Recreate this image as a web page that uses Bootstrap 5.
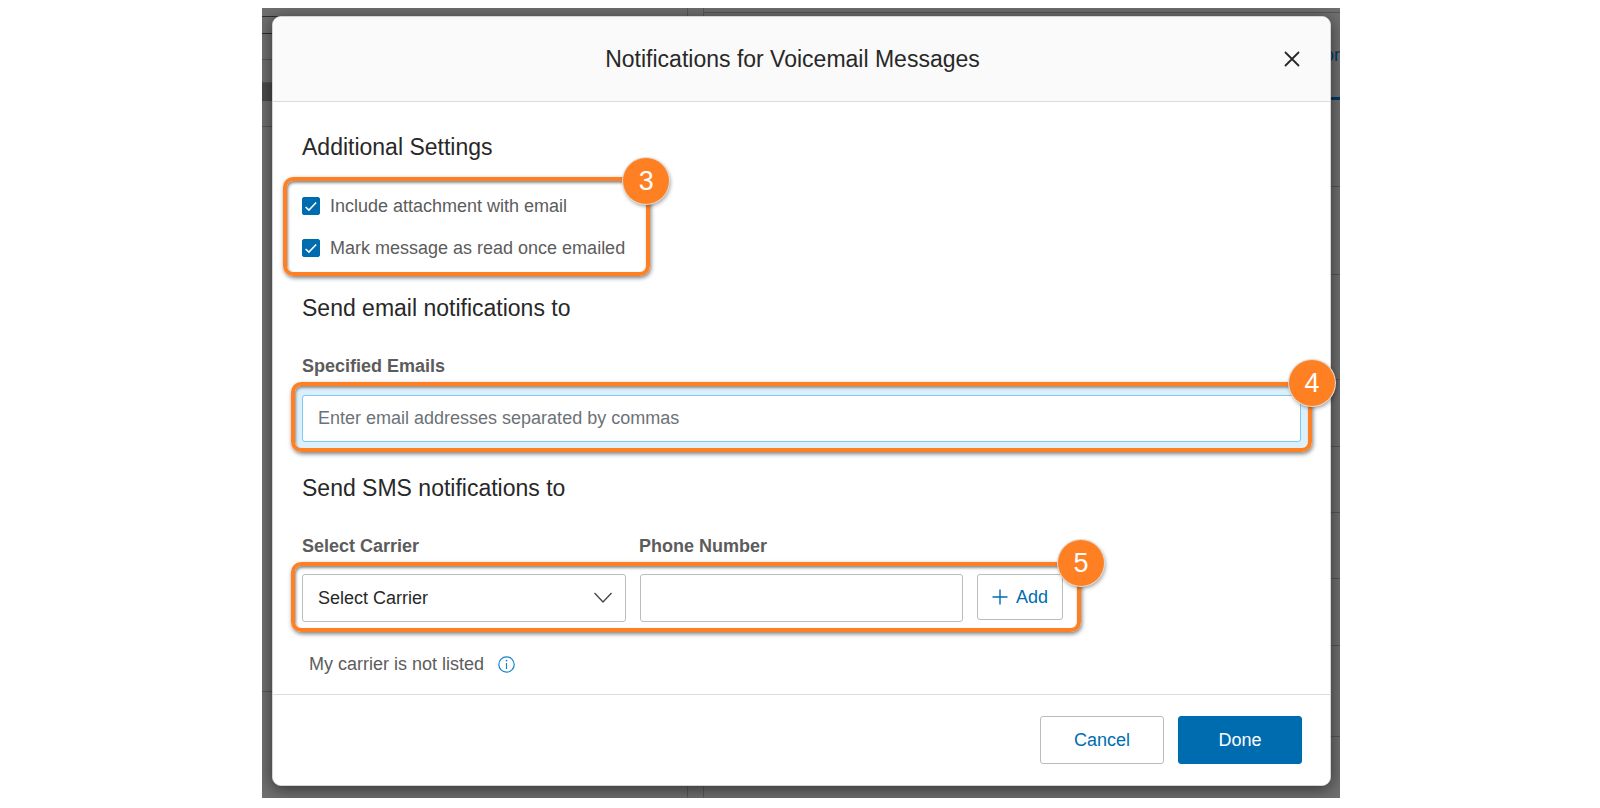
<!DOCTYPE html>
<html lang="en">
<head>
<meta charset="utf-8">
<meta name="viewport" content="width=device-width, initial-scale=1">
<title>Notifications for Voicemail Messages</title>
<link href="https://cdn.jsdelivr.net/npm/bootstrap@5.3.0/dist/css/bootstrap.min.css" rel="stylesheet">
<style>
  :root { --accent: #006cb0; --callout: #ff8023; --ink: #282828; --muted-ink: #5c5c5c; --line: #bcbcbc; }
  body { font-family: "Liberation Sans", Arial, sans-serif; font-size: 18px; line-height: 24px; color: var(--muted-ink); background: #fff; padding-left: 2px; }

  /* dimmed page with the dialog over it */
  .stage { max-width: 1078px; margin: 8px auto 10px; padding: 8px 9px 12px 10px; background: #6f6f6f; overflow: hidden; }
  .behind { inset: 0; }
  .pane-left { width: 426px; border-right: 1px solid #5a5a5a; }
  .pane-right { margin-left: 15px; border-left: 1px solid #5a5a5a; }
  .strip { border-bottom: 1px solid #565656; }
  .strip-strong { border-bottom-color: #2c2c2c; }
  .strip-tab { border-bottom: 3px solid #003a5e; color: #003a5e; line-height: 24px; padding-top: 30px; }
  .strip-fill { background: #4b4b4b; }

  .dialog { border: 1px solid #d4d4d4; border-radius: 9px; box-shadow: 0 3px 16px rgba(0,0,0,.55); }
  .dialog > .card-header { background: #fafafa; border-bottom: 1px solid #dcdcdc; padding: 28px 46px 28px 28px; border-radius: 8px 8px 0 0; }
  .dialog > .card-body { padding: 31px 29px 18px; color: var(--muted-ink); }
  .dialog > .card-footer { background: #fff; border-top: 1px solid #dcdcdc; padding: 21px 28px; border-radius: 0 0 8px 8px; gap: 14px; }
  .heading { font-size: 23px; line-height: 28px; font-weight: 400; color: var(--ink); margin: 0; }
  .field-label { font-weight: 700; margin: 32px 0 4px; }
  .close-btn { right: 28px; width: 20px; height: 20px; }

  /* numbered orange frames */
  .callout { position: relative; border: 4px solid transparent; }
  .callout::after { content: ""; position: absolute; inset: -4px; border: 4px solid var(--callout); border-radius: 10px; pointer-events: none;
    box-shadow: 1px 2px 4px rgba(0,0,0,.5), inset 1px 2px 3px rgba(0,0,0,.45); }
  .callout-checks { width: fit-content; margin: 16px 0 18px -19px; padding: 4px 21px 3px 15px; }
  .callout-field { margin: 0 -11px 22px; padding: 9px 7px 6px; }
  .callout-sms { max-width: 790px; margin: 0 0 20px -11px; padding: 8px 14px 6px 7px; }
  .step { position: absolute; z-index: 2; width: 46px; height: 46px; border-radius: 50%; background: var(--callout); color: #fff; font-size: 27px; line-height: 46px; text-align: center;
    box-shadow: 0 0 0 1px #e6dcd4, 1px 2px 4px rgba(0,0,0,.45); }
  .step-corner { top: -3px; left: calc(100% + 4px); transform: translate(-50%, -50%); }

  .check-row { height: 42px; }
  .check-row .form-check-input { width: 18px; height: 18px; margin: 0 10px 0 0; border-radius: 2px; }
  .check-row .form-check-input:checked { background-color: var(--accent); border-color: var(--accent);
    background-image: url("data:image/svg+xml,%3csvg xmlns='http://www.w3.org/2000/svg' viewBox='0 0 16 16'%3e%3cpath d='M2.6 9l3.3 3.1L13.2 4.400' fill='none' stroke='%23fff' stroke-width='1.5'/%3e%3c/svg%3e"); }

  .field { height: 48px; font-size: 18px; line-height: 24px; border: 1px solid var(--line); border-radius: 3px; padding: 0 15px; color: var(--ink); }
  .field::placeholder { color: #6b7278; }
  .field-active { height: 47px; border-color: #7dcaf4; box-shadow: 0 0 3px 7px #dcf0fb; }
  select.field { background-size: 20px 12px; background-position: right 12px center;
    background-image: url("data:image/svg+xml,%3csvg xmlns='http://www.w3.org/2000/svg' viewBox='0 0 20 12'%3e%3cpath d='M1.500 1L10 10 18.500 1' fill='none' stroke='%23444' stroke-width='1.300'/%3e%3c/svg%3e"); }
  .sms-grid { display: grid; grid-template-columns: 1fr 1fr 86px; column-gap: 14px; }
  .sms-labels { max-width: 760px; }
  .action { height: 48px; width: 124px; padding: 0; font-size: 18px; line-height: 24px; border-radius: 3px; color: var(--accent); background: #fff; border: 1px solid var(--line); }
  .action-main { background: var(--accent); border-color: var(--accent); color: #fff; }
  .action-add { width: auto; height: 46px; gap: 8px; }
  .note { padding-left: 7px; gap: 14px; }
</style>
</head>
<body>
<div class="stage position-relative">
  <div class="behind position-absolute d-flex" aria-hidden="true">
    <div class="pane-left">
      <div class="strip strip-strong" style="height:9px"></div>
      <div class="strip strip-strong" style="height:17px"></div>
      <div class="strip" style="height:26px"></div>
      <div class="strip" style="height:23px"></div>
      <div class="strip-fill" style="height:18px"></div>
      <div class="strip" style="height:26px"></div>
      <div class="strip" style="height:565px"></div>
    </div>
    <div class="pane-right flex-fill">
      <div class="strip" style="height:5px"></div>
      <div class="strip-tab text-end overflow-hidden" style="height:87px">or</div>
      <div class="strip" style="height:87px"></div>
      <div class="strip" style="height:88px"></div>
      <div class="strip" style="height:105px"></div>
      <div class="strip" style="height:67px"></div>
      <div class="strip" style="height:66px"></div>
      <div class="strip" style="height:66px"></div>
      <div class="strip" style="height:67px"></div>
      <div class="strip" style="height:91px"></div>
    </div>
  </div>

  <form class="dialog card" role="dialog" aria-labelledby="dialog-title">
    <div class="card-header d-flex justify-content-center align-items-center position-relative">
      <h1 class="heading" id="dialog-title">Notifications for Voicemail Messages</h1>
      <button type="button" class="close-btn btn p-0 border-0 d-flex align-items-center justify-content-center position-absolute" aria-label="Close">
        <svg width="16" height="16" viewBox="0 0 16 16" fill="none" stroke="#282828" stroke-width="1.8" stroke-linecap="round"><path d="M1.500 1.500l13 13M14.500 1.500l-13 13"/></svg>
      </button>
    </div>

    <div class="card-body">
      <h2 class="heading">Additional Settings</h2>
      <div class="callout callout-checks">
        <div class="check-row d-flex align-items-center">
          <input class="form-check-input" type="checkbox" id="attach" checked>
          <label for="attach">Include attachment with email</label>
        </div>
        <div class="check-row d-flex align-items-center">
          <input class="form-check-input" type="checkbox" id="markread" checked>
          <label for="markread">Mark message as read once emailed</label>
        </div>
        <span class="step top-0 start-100 translate-middle">3</span>
      </div>

      <h2 class="heading">Send email notifications to</h2>
      <label class="field-label d-block" for="emails">Specified Emails</label>
      <div class="callout callout-field">
        <input class="form-control field field-active" type="text" id="emails" placeholder="Enter email addresses separated by commas">
        <span class="step step-corner">4</span>
      </div>

      <h2 class="heading">Send SMS notifications to</h2>
      <div class="sms-grid sms-labels">
        <label class="field-label" for="carrier">Select Carrier</label>
        <label class="field-label" for="phone">Phone Number</label>
      </div>
      <div class="callout callout-sms">
        <div class="sms-grid">
          <select class="form-select field" id="carrier"><option>Select Carrier</option></select>
          <input class="form-control field" type="tel" id="phone">
          <button type="button" class="btn action action-add d-flex align-items-center justify-content-center">
            <svg width="16" height="16" viewBox="0 0 16 16" stroke="#006cb0" stroke-width="1.4"><path d="M8 .5v15M.5 8h15"/></svg>
            Add
          </button>
        </div>
        <span class="step step-corner">5</span>
      </div>
      <div class="note d-flex align-items-center">
        <span>My carrier is not listed</span>
        <svg width="17" height="17" viewBox="0 0 17 17" fill="none" stroke="#1583c7" stroke-width="1.2" role="img" aria-label="Information"><circle cx="8.500" cy="8.500" r="7.700"/><path d="M8.500 7v6"/><circle cx="8.500" cy="4.600" r=".9" fill="#1583c7" stroke="none"/></svg>
      </div>
    </div>

    <div class="card-footer d-flex justify-content-end">
      <button type="button" class="btn action">Cancel</button>
      <button type="submit" class="btn action action-main">Done</button>
    </div>
  </form>
</div>
<script src="https://cdn.jsdelivr.net/npm/bootstrap@5.3.0/dist/js/bootstrap.bundle.min.js"></script>
</body>
</html>
